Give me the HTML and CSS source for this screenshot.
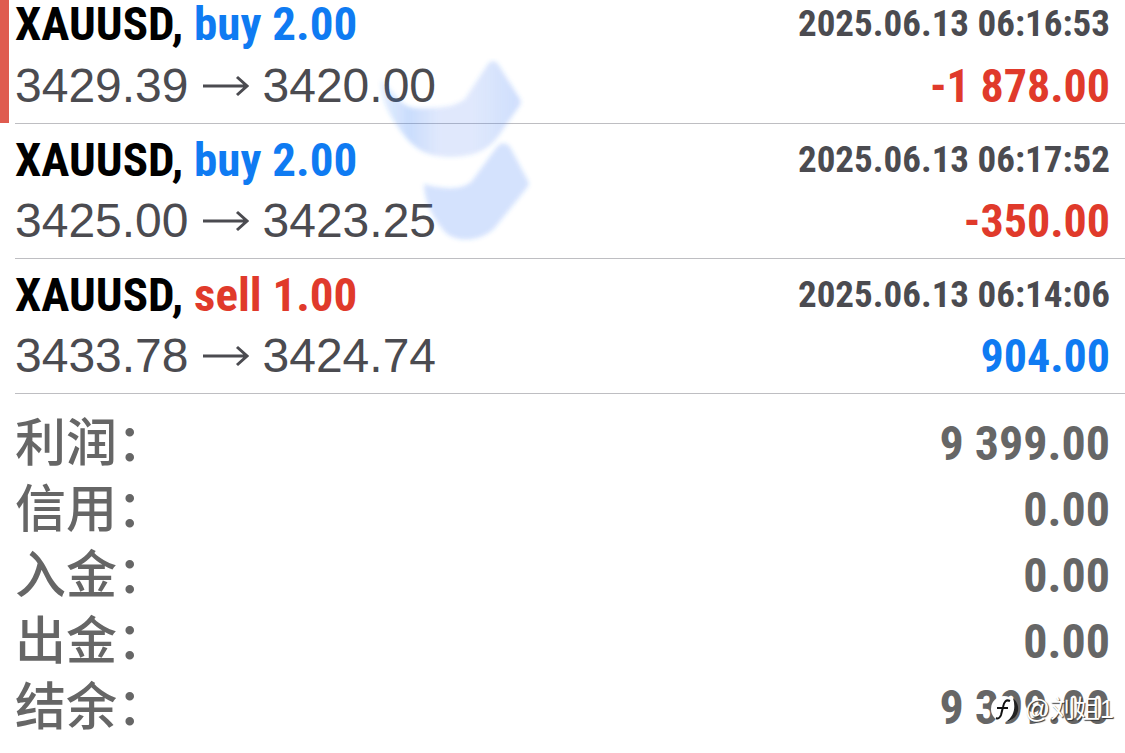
FILE: index.html
```
<!DOCTYPE html>
<html lang="zh-CN">
<head>
    <meta charset="UTF-8">
    <meta name="viewport" content="width=device-width, initial-scale=1.0">
    <title>XAUUSD</title>
    <link rel="stylesheet" href="styles.css">
</head>
<body>
    <main class="history">
        <!-- Closed deals -->
        <ul class="deals">
            <li class="deal marked">
                <div class="row">
                    <div class="symbol">XAUUSD, <span class="buy">buy 2.00</span></div>
                    <time class="time">2025.06.13 06:16:53</time>
                </div>
                <div class="row">
                    <div class="prices">
                        <span>3429.39</span>
                        <svg class="arrow" viewBox="0 0 46 22" aria-hidden="true"><path d="M0 11H44M34 2L44 11L34 20"/></svg>
                        <span>3420.00</span>
                    </div>
                    <div class="amount loss">-1 878.00</div>
                </div>
            </li>
            <li class="deal">
                <div class="row">
                    <div class="symbol">XAUUSD, <span class="buy">buy 2.00</span></div>
                    <time class="time">2025.06.13 06:17:52</time>
                </div>
                <div class="row">
                    <div class="prices">
                        <span>3425.00</span>
                        <svg class="arrow" viewBox="0 0 46 22" aria-hidden="true"><path d="M0 11H44M34 2L44 11L34 20"/></svg>
                        <span>3423.25</span>
                    </div>
                    <div class="amount loss">-350.00</div>
                </div>
            </li>
            <li class="deal">
                <div class="row">
                    <div class="symbol">XAUUSD, <span class="sell">sell 1.00</span></div>
                    <time class="time">2025.06.13 06:14:06</time>
                </div>
                <div class="row">
                    <div class="prices">
                        <span>3433.78</span>
                        <svg class="arrow" viewBox="0 0 46 22" aria-hidden="true"><path d="M0 11H44M34 2L44 11L34 20"/></svg>
                        <span>3424.74</span>
                    </div>
                    <div class="amount profit">904.00</div>
                </div>
            </li>
        </ul>

        <!-- Totals -->
        <dl class="summary">
            <div class="total"><dt>利润：</dt><dd>9 399.00</dd></div>
            <div class="total"><dt>信用：</dt><dd>0.00</dd></div>
            <div class="total"><dt>入金：</dt><dd>0.00</dd></div>
            <div class="total"><dt>出金：</dt><dd>0.00</dd></div>
            <div class="total"><dt>结余：</dt><dd>9 399.00</dd></div>
        </dl>

        <!-- Brand mark floating over the list -->
        <svg class="brand" viewBox="0 0 160 190" aria-hidden="true">
            <defs>
                <linearGradient id="wing" x1="0" y1="0" x2="1" y2="0">
                    <stop offset="0" stop-color="#2f7bf5" stop-opacity=".12"/>
                    <stop offset=".2" stop-color="#2f7bf5" stop-opacity=".26"/>
                    <stop offset=".42" stop-color="#3b74f0" stop-opacity=".16"/>
                    <stop offset=".65" stop-color="#3b74f0" stop-opacity=".16"/>
                    <stop offset="1" stop-color="#3b78f6" stop-opacity=".24"/>
                </linearGradient>
                <filter id="soft"><feGaussianBlur stdDeviation="2"/></filter>
            </defs>
            <g filter="url(#soft)">
                <path fill="url(#wing)" d="M6 22C17 30 24 49 40 50C62 51 80 49 90 41L113 6Q118 0 123 6L145 41Q147 46 143 50L122 80C112 93 96 99 76 99C51 99 39 90 28 76C17 61 5 44 6 22Z"/>
                <path fill="#3b78f6" fill-opacity=".21" d="M49 126C66 131 87 133 97 123L121 90Q128 81 135 89L153 123Q155 127 151 131L122 167C110 184 80 186 69 173C60 162 49 145 49 126Z"/>
            </g>
        </svg>

        <div class="watermark">
            <svg class="watermark-logo" viewBox="0 0 28 28" aria-hidden="true">
                <circle cx="13" cy="14" r="13" fill="#fff"/>
                <path d="M19 6C15 4 13 7 12 12L10 20C9 23 7 24 5 23M6 13H17" fill="none" stroke="#111" stroke-width="2"/>
                <path d="M22 3C31 11 28 24 15 27C23 21 25 13 22 3Z" fill="#222"/>
            </svg>
            <span>@刘姐1</span>
        </div>
    </main>
</body>
</html>
```
FILE: styles.css
```
* {
    box-sizing: border-box;
}

body {
    margin: 0;
    background: #fff;
    color: #4b4b50;
    font-family: "Liberation Sans", "Noto Sans CJK SC", sans-serif;
}

.history {
    position: relative;
}

.deals {
    list-style: none;
    margin: 0;
    padding: 0;
}

.deal {
    position: relative;
    margin-left: 15px;
    padding: 4px 15px 6px 0;
    border-bottom: 1px solid #bebec2;
}

.marked {
    padding-top: 0;
}

.marked::before {
    content: "";
    position: absolute;
    left: -15px;
    top: 0;
    bottom: 0;
    width: 9px;
    background: #df5b4f;
}

.row {
    display: flex;
    align-items: center;
    justify-content: space-between;
    height: 62px;
    line-height: 1;
}

.marked .row:first-child {
    height: 47px;
    margin-bottom: 8px;
}

.symbol,
.time,
.amount,
.total dd {
    font-family: "Roboto Condensed", "Liberation Sans Narrow", sans-serif;
    font-weight: bold;
    white-space: nowrap;
}

.symbol {
    color: #000;
    font-size: 47px;
}

.time {
    font-size: 37px;
}

.prices {
    display: flex;
    align-items: center;
    gap: 14px;
    font-size: 48px;
}

.arrow {
    width: 46px;
    height: 22px;
    fill: none;
    stroke: #4b4b50;
    stroke-width: 3;
}

.amount {
    font-size: 46px;
}

.buy,
.profit {
    color: #0f7bf2;
}

.sell,
.loss {
    color: #e03a2b;
}

.summary {
    margin: 0;
    padding: 17px 15px 12px;
    color: #666;
}

.total {
    display: flex;
    align-items: center;
    justify-content: space-between;
    height: 66px;
    line-height: 1;
}

.total dt {
    align-self: flex-start;
    font-family: "Noto Sans CJK SC", sans-serif;
    font-size: 51px;
    font-weight: 500;
    line-height: 56px;
}

.total dd {
    margin: 0;
    font-size: 48px;
}

.brand {
    position: absolute;
    left: 375px;
    top: 58px;
    width: 160px;
    height: 190px;
    pointer-events: none;
}

.watermark {
    position: absolute;
    right: 11px;
    bottom: 30px;
    display: flex;
    align-items: center;
    gap: 6px;
    color: #fff;
    font-size: 25px;
    line-height: 28px;
    text-shadow: 1px 1px 1px #333;
}

.watermark-logo {
    width: 28px;
    height: 28px;
}
```
